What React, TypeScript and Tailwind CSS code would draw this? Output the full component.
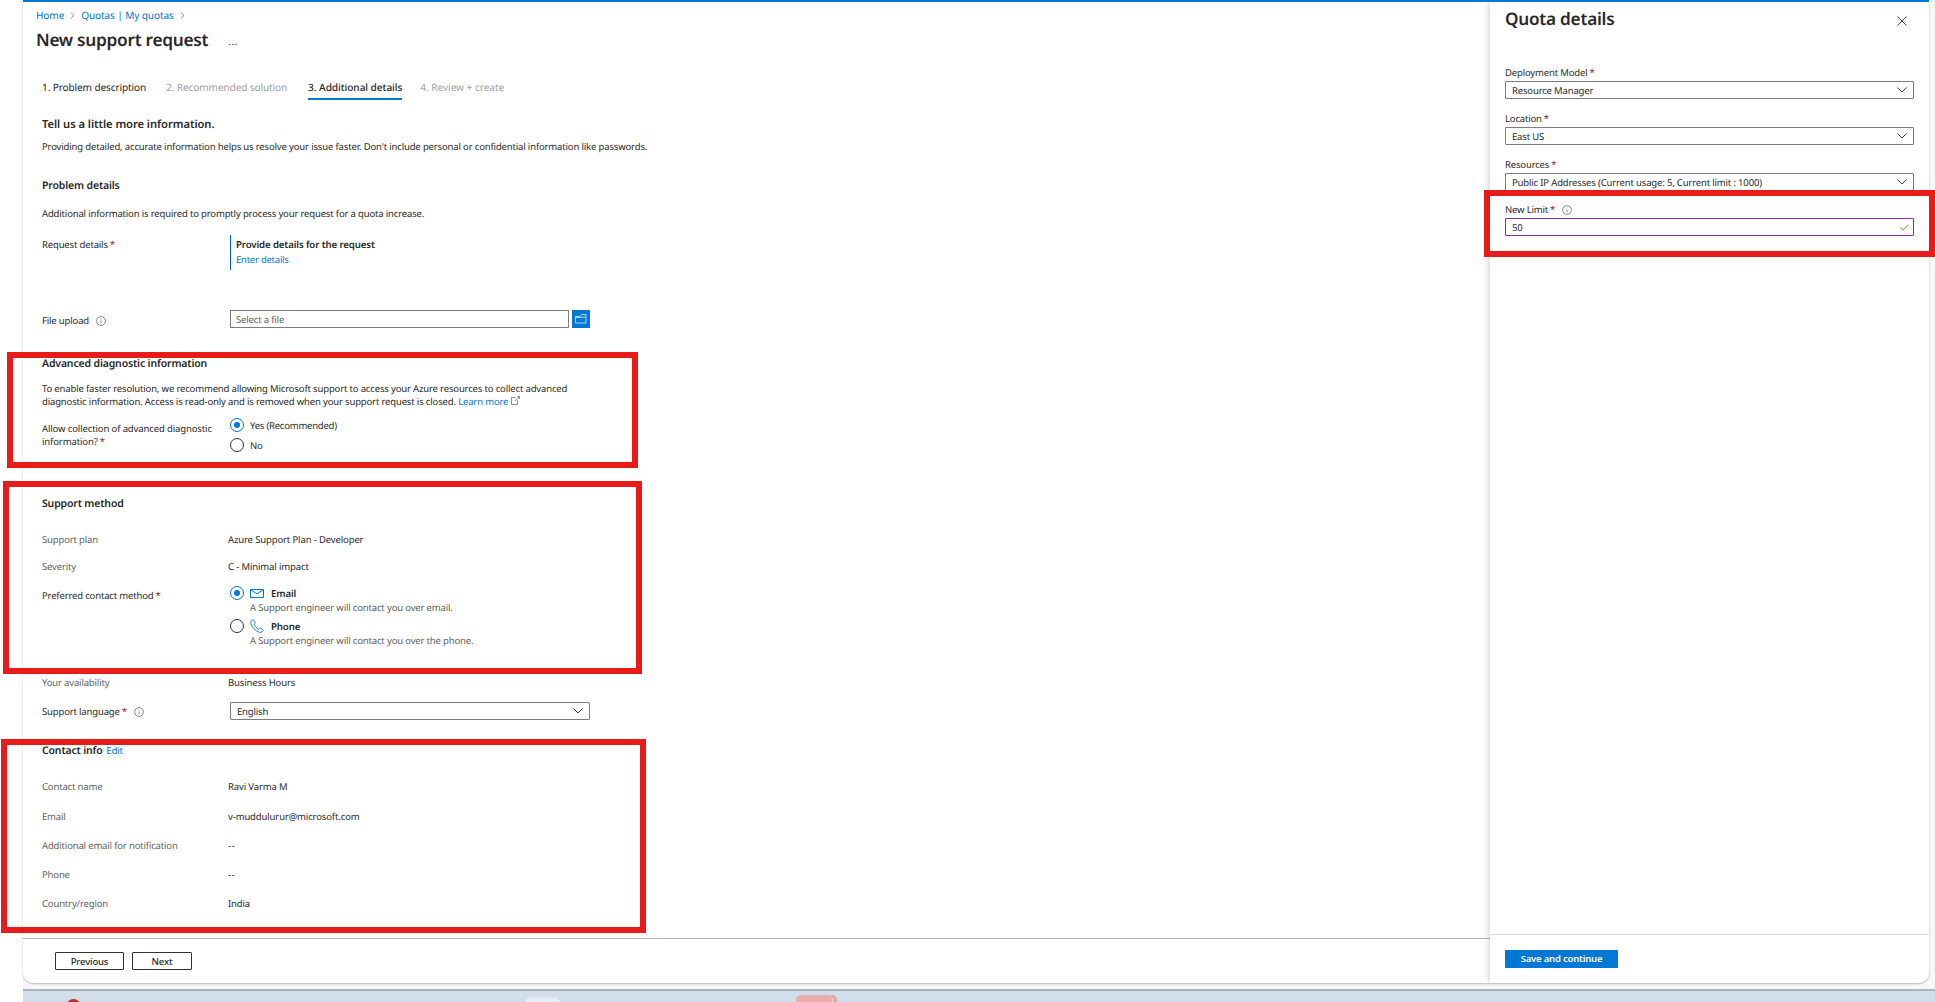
import type { ReactNode } from "react"

const body = "text-[9.5px] leading-[14px] tracking-[-0.16px]"
const heading = "text-[10.5px] leading-[14px] font-semibold tracking-[-0.16px]"

const Star = () => <span className="ml-[2px] text-[#a4262c]">*</span>

function Info() {
  return (
    <svg viewBox="0 0 10 10" className="size-[10px] shrink-0" fill="none" stroke="#6b6a69" strokeWidth="0.8">
      <circle cx="5" cy="5" r="4.4" />
      <path d="M5 4.4v3M5 2.5v.9" />
    </svg>
  )
}

function Chevron({ className }: { className: string }) {
  return (
    <svg viewBox="0 0 10 6" className={className} fill="none" stroke="#323130" strokeWidth="0.9">
      <path d="M.5.5 5 5 9.500.5" />
    </svg>
  )
}

function Crumb() {
  return (
    <svg viewBox="0 0 5 8" className="h-[7px] w-[5px]" fill="none" stroke="#605e5c" strokeWidth="0.8">
      <path d="M.5.5 4.300 4 .5 7.500" />
    </svg>
  )
}

function Radio({ on }: { on?: boolean }) {
  return (
    <span className={`flex size-[14px] shrink-0 items-center justify-center rounded-full border ${on ? "border-[#0078d4]" : "border-[#323130]"}`}>
      {on && <span className="size-[6px] rounded-full bg-[#0078d4]" />}
    </span>
  )
}

function Select({ value }: { value: string }) {
  return (
    <div className="flex h-full w-full items-center justify-between rounded-[1px] border border-[#7f7d7b] bg-white pl-[6px] pr-[6px]">
      <span className="pt-px">{value}</span>
      <Chevron className="h-[6px] w-[10px]" />
    </div>
  )
}

function Field({ label, children, className }: { label: string; children: ReactNode; className?: string }) {
  return (
    <div className={`flex ${body} ${className ?? ""}`}>
      <span className="w-[186px] text-[#605e5c]">{label}</span>
      <span className={children === "--" ? "tracking-[0.7px]" : "tracking-[-0.13px]"}>{children}</span>
    </div>
  )
}

const contact = [
  { label: "Contact name", value: "Ravi Varma M" },
  { label: "Email", value: "v-muddulurur@microsoft.com" },
  { label: "Additional email for notification", value: "--" },
  { label: "Phone", value: "--" },
  { label: "Country/region", value: "India" },
]

const quota = [
  { label: "Deployment Model", value: "Resource Manager" },
  { label: "Location", value: "East US" },
  { label: "Resources", value: "Public IP Addresses (Current usage: 5, Current limit : 1000)" },
]

function RequestForm() {
  return (
    <main className="flex w-[1467px] flex-col">
      <div className="mt-[6px] flex h-[14px] items-center pl-[13px] text-[10.1px] leading-[14px] tracking-[-0.13px] text-[#0078d4]">
        <a>Home</a>
        <span className="mx-[6px]"><Crumb /></span>
        <a>Quotas | My quotas</a>
        <span className="ml-[6px]"><Crumb /></span>
      </div>
      <div className="mt-[7px] flex h-[24px] items-center pl-[13px]">
        <h1 className="text-[17.3px] leading-[24px] font-semibold tracking-[-0.3px]">New support request</h1>
        <span className="ml-[20px] text-[10px] leading-[14px] tracking-[0.5px]">...</span>
      </div>

      <div className="flex flex-1 flex-col pl-[19px]">
        <nav className="mt-[27px] flex h-[20px] text-[10.1px] leading-[14px] tracking-[-0.13px]">
          <span>1. Problem description</span>
          <span className="ml-[20px] text-[#a19f9d]">2. Recommended solution</span>
          <span className="ml-[21px] border-b-2 border-[#0078d4] font-medium tracking-[-0.05px]">3. Additional details</span>
          <span className="ml-[18px] tracking-[-0.04px] text-[#a19f9d]">4. Review + create</span>
        </nav>

        <h2 className="mt-[18px] text-[11.2px] leading-[14px] font-semibold tracking-[-0.06px]">Tell us a little more information.</h2>
        <p className="mt-[8px] text-[9.5px] leading-[14px] tracking-[-0.152px]">Providing detailed, accurate information helps us resolve your issue faster. Don't include personal or confidential information like passwords.</p>

        <h3 className={`mt-[25px] ${heading}`}>Problem details</h3>
        <p className={`mt-[14px] ${body}`}>Additional information is required to promptly process your request for a quota increase.</p>
        <div className={`mt-[14px] flex h-[35px] ${body}`}>
          <span className="w-[188px] pt-[3px]">Request details<Star /></span>
          <div className="border-l border-[#015cda] pt-[3px] pl-[5px]">
            <p className="text-[9.7px] font-semibold tracking-[-0.14px]">Provide details for the request</p>
            <a className="mt-px block tracking-[-0.24px] text-[#0078d4]">Enter details</a>
          </div>
        </div>
        <div className={`mt-[40px] flex h-[18px] items-center ${body}`}>
          <span className="flex w-[188px] items-center gap-[7px] pt-[3px]">File upload<Info /></span>
          <div className="flex h-[18px] w-[339px] items-center border border-[#7f7d7b] pt-px pl-[5px] text-[#605e5c]">Select a file</div>
          <button className="ml-[3px] flex size-[18px] items-center justify-center bg-[#0078d4]">
            <svg viewBox="0 0 12 10" className="h-[10px] w-[12px]" fill="none" stroke="#d6e9f8" strokeWidth="0.8">
              <path d="M.5 2.500H5L6.500.5h4.500v8.500H.5zM.5 3.500H5.500L6.500 3h4.500" />
            </svg>
          </button>
        </div>

        <h3 className={`mt-[29px] ${heading}`}>Advanced diagnostic information</h3>
        <p className="mt-[11px] text-[9.5px] leading-[13px] tracking-[-0.155px]">
          To enable faster resolution, we recommend allowing Microsoft support to access your Azure resources to collect advanced
          <br />
          diagnostic information. Access is read-only and is removed when your support request is closed.{" "}
          <a className="text-[#0078d4]">Learn more</a>
          <svg viewBox="0 0 9 9" className="mb-[3px] ml-[3px] inline size-[9px]" fill="none" stroke="#605e5c" strokeWidth="0.7">
            <path d="M4.500 1.500H.5v7h6V4.500M4 5 8.500.5M6 .5h2.500V3" />
          </svg>
        </p>
        <div className={`mt-[10px] flex h-[34px] ${body}`}>
          <span className="w-[188px] pt-[4px] leading-[13px] tracking-[-0.12px]">Allow collection of advanced diagnostic<br />information?<Star /></span>
          <div className="flex flex-col gap-[6px]">
            <label className="flex h-[14px] items-center gap-[6px]"><Radio on /><span className="pt-px tracking-[-0.22px]">Yes (Recommended)</span></label>
            <label className="flex h-[14px] items-center gap-[6px]"><Radio /><span className="pt-px">No</span></label>
          </div>
        </div>

        <h3 className={`mt-[45px] ${heading}`}>Support method</h3>
        <Field label="Support plan" className="mt-[22px]">Azure Support Plan - Developer</Field>
        <Field label="Severity" className="mt-[13px]">C - Minimal impact</Field>
        <div className={`mt-[12px] flex h-[62px] ${body}`}>
          <span className="w-[188px] pt-[3px]">Preferred contact method<Star /></span>
          <div>
            <label className="flex h-[14px] items-center">
              <Radio on />
              <svg viewBox="0 0 14 9" className="ml-[6px] h-[9px] w-[14px]" fill="none" stroke="#0078d4" strokeWidth="1">
                <path d="M.5.5h13v8H.5zM.5.8 7 4.800 13.500.8" />
              </svg>
              <span className="ml-[7px] pt-px text-[9.7px] font-semibold">Email</span>
            </label>
            <p className="mt-px ml-[20px] text-[#605e5c]">A Support engineer will contact you over email.</p>
            <label className="mt-[4px] flex h-[14px] items-center">
              <Radio />
              <svg viewBox="0 0 14 14" className="ml-[6px] size-[14px]" fill="none" stroke="#0078d4" strokeWidth="0.9">
                <path d="M2.500.9C1 1.500.4 3 1 4.800c1.200 3.700 4.200 6.900 7.800 8.300 1.800.6 3.400.1 4.200-1.400.2-.5.1-.8-.3-1.100L10.800 9.300c-.4-.3-.8-.2-1.100.1l-.9.9C6.700 9.200 5 7.400 4.100 5.300l.9-.9c.3-.3.3-.7.1-1L3.700 1.200C3.400.8 3 .7 2.500.9z" />
              </svg>
              <span className="ml-[7px] pt-px text-[9.7px] font-semibold">Phone</span>
            </label>
            <p className="mt-px ml-[20px] text-[#605e5c]">A Support engineer will contact you over the phone.</p>
          </div>
        </div>
        <Field label="Your availability" className="mt-[28px]">Business Hours</Field>
        <div className={`mt-[12px] flex h-[18px] items-center ${body}`}>
          <span className="flex w-[188px] items-center pt-px">Support language<Star /><span className="ml-[7px]"><Info /></span></span>
          <div className="h-[18px] w-[360px]"><Select value="English" /></div>
        </div>

        <h3 className={`mt-[24px] ${heading}`}>Contact info <a className="ml-[1px] text-[9.7px] font-normal text-[#0078d4]">Edit</a></h3>
        <div className="mt-[22px] flex flex-col gap-[15.25px]">
          {contact.map((c) => <Field key={c.label} label={c.label}>{c.value}</Field>)}
        </div>
      </div>

      <div className="flex h-[45px] gap-[8px] border-t border-[#b3b0ad] pt-[13px] pl-[32px]">
        <button className="h-[18px] w-[69px] rounded-[1px] border border-[#323130] text-[9.5px] leading-[17px] font-medium tracking-[-0.16px]">Previous</button>
        <button className="h-[18px] w-[60px] rounded-[1px] border border-[#323130] text-[9.5px] leading-[17px] font-medium tracking-[-0.16px]">Next</button>
      </div>
    </main>
  )
}

function QuotaPanel() {
  return (
    <aside className="flex w-[439px] flex-col rounded-br-[10px] bg-white shadow-[-1px_0_6px_rgba(0,0,0,0.2)]">
      <div className="mt-[6px] flex h-[24px] items-center justify-between pr-[22px] pl-[15px]">
        <h2 className="text-[17.2px] leading-[24px] font-semibold tracking-[-0.25px]">Quota details</h2>
        <svg viewBox="0 0 10 10" className="mt-[1px] size-[10px]" fill="none" stroke="#323130" strokeWidth="0.9">
          <path d="M.5.5l9 9M9.500.5l-9 9" />
        </svg>
      </div>
      <div className={`mt-[34px] flex flex-1 flex-col px-[15px] ${body}`}>
        <div className="mb-[12px] flex flex-col gap-[13px]">
          {quota.map((q) => (
            <div key={q.label}>
              <div className="mb-px h-[14px]">{q.label}<Star /></div>
              <div className="h-[18px]"><Select value={q.value} /></div>
            </div>
          ))}
        </div>
        <div className="flex h-[14px] items-center">New Limit<Star /><span className="ml-[7px]"><Info /></span></div>
        <div className="mt-[1px] flex h-[18px] items-center justify-between rounded-[1px] border border-[#8a2da5] pr-[4px] pl-[6px]">
          <span className="pt-px">50</span>
          <svg viewBox="0 0 10 8" className="h-[7px] w-[9px]" fill="none" stroke="#57a300" strokeWidth="1">
            <path d="M.5 4.300 3.300 7 9.500.8" />
          </svg>
        </div>
      </div>
      <div className="flex h-[49px] border-t border-[#dddddd] pt-[15px] pl-[15px]">
        <button className="h-[18px] w-[113px] rounded-[1px] bg-[#0078d4] text-[9.5px] leading-[18px] font-semibold tracking-[-0.2px] text-white">Save and continue</button>
      </div>
    </aside>
  )
}

export default function App() {
  return (
    <div className="relative flex h-[1002px] w-[1935px] overflow-hidden bg-white pl-[23px] font-['Noto_Sans','Open_Sans',sans-serif] text-[#292827] [text-rendering:geometricPrecision]">
      <div className="flex w-[1912px] flex-col bg-[#f7f7f7]">
        <div className="h-[983px] w-[1906px] rounded-b-[10px] bg-white shadow-[0_1px_2px_rgba(0,0,0,0.25)]">
          <div className="h-[2px] bg-[#0078d4]" />
          <div className="flex h-[981px] overflow-hidden rounded-b-[10px]">
            <RequestForm />
            <QuotaPanel />
          </div>
        </div>
        {/* top edge of the taskbar */}
        <div className="relative mt-[6px] flex-1 overflow-hidden border-t-2 border-[#a9b2b9] bg-[#d2deea]">
          <span className="absolute top-[8px] left-[43px] size-[15px] rounded-full bg-[#c42b2b]" />
          <span className="absolute top-[6px] left-[502px] h-[20px] w-[35px] rounded-[5px] border border-[#dde6ef] bg-[#e8eef5]" />
          <span className="absolute top-[4px] left-[775px] h-[20px] w-[39px] rounded-[5px] bg-[#e9a5a3]" />
          <span className="absolute top-[4px] left-[773px] h-[20px] w-[37px] rounded-[5px] border-r border-[#d2deea] bg-[#e9adab]" />
        </div>
      </div>

      {/* highlight boxes */}
      <div className="absolute top-[352px] left-[7px] h-[116px] w-[631px] border-6 border-[#e81b1b]" />
      <div className="absolute top-[481px] left-[3px] h-[193px] w-[639px] border-6 border-[#e81b1b]" />
      <div className="absolute top-[739px] left-[1px] h-[194px] w-[645px] border-6 border-[#e81b1b]" />
      <div className="absolute top-[190px] left-[1484px] h-[67px] w-[451px] border-6 border-[#e81b1b]" />
    </div>
  )
}
